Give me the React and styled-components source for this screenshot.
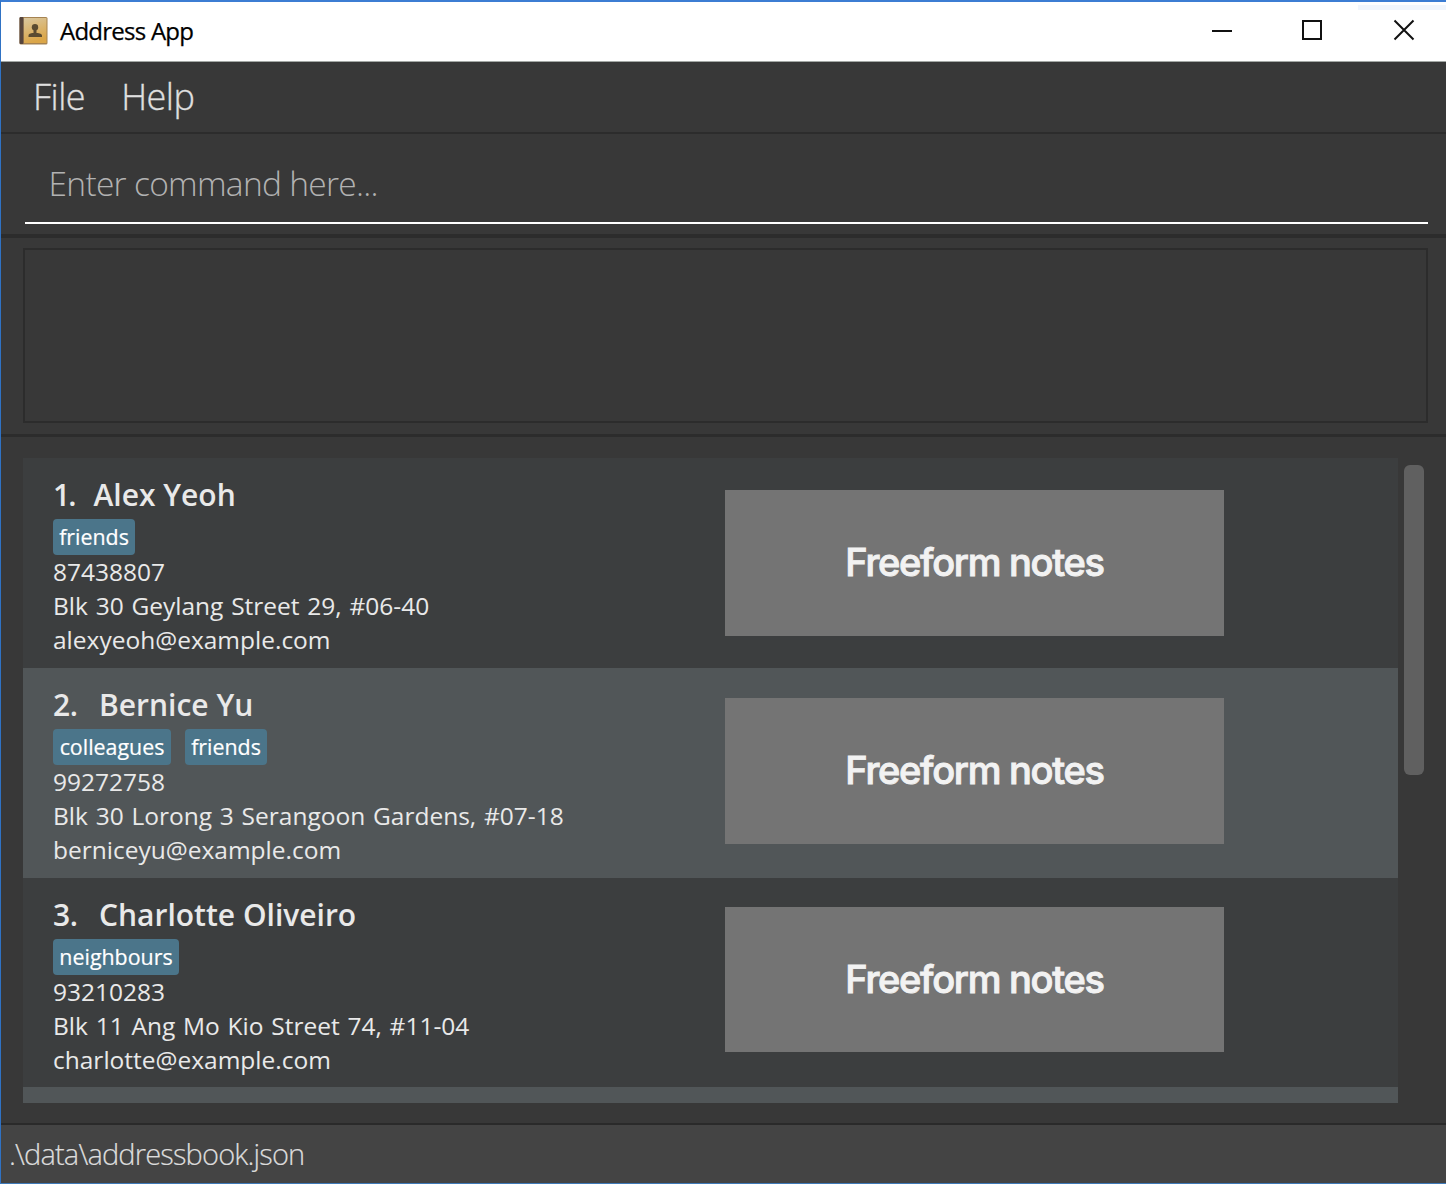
import React from "react";
import styled, { createGlobalStyle } from "styled-components";

const line = "#2c2c2c";

const GlobalStyle = createGlobalStyle`
  * { box-sizing: border-box; }
  body { margin: 0; background: #383838; }
`;

const Window = styled.div`
  width: 1446px;
  height: 1184px;
  display: flex;
  flex-direction: column;
  overflow: hidden;
  background: #383838;
  border-top: 2px solid #3c7dd3;
  border-left: 1px solid #2f72c4;
  border-bottom: 1px solid #3f7ab8;
  font-family: "Open Sans", "Noto Sans", sans-serif;
  white-space: nowrap;
`;

const TitleBar = styled.header`
  flex: none;
  display: flex;
  align-items: center;
  height: 60px;
  padding-left: 17px;
  background: linear-gradient(#f1f6fd, #f1f6fd) right 3px / 88px 5px no-repeat #fff;
  border-bottom: 1px solid #a3a8a5;
`;

const Title = styled.h1`
  flex: 1;
  margin: 0 0 0 12px;
  padding-bottom: 1px;
  font-size: 24px;
  font-weight: 400;
  line-height: 34px;
  letter-spacing: -0.75px;
  -webkit-text-stroke: 0.25px #000;
  color: #000;
`;

const WindowButton = styled.button`
  display: flex;
  align-items: center;
  justify-content: center;
  width: ${(p) => p.$width}px;
  height: 56px;
  padding: 0;
  border: 0;
  background: none;
`;

const WindowButtons = styled.div`
  display: flex;
  margin-right: -4px;
  padding-bottom: 3px;
`;

const MenuBar = styled.nav`
  flex: none;
  display: flex;
  gap: 36px;
  height: 72px;
  padding: 10px 0 0 32px;
  border-bottom: 2px solid ${line};
`;

const MenuItem = styled.span`
  font-size: 36px;
  font-weight: 300;
  line-height: 50px;
  letter-spacing: -0.5px;
  -webkit-text-stroke: 0.3px #e0e0e0;
  color: #e0e0e0;
`;

const CommandPane = styled.section`
  flex: none;
  height: 104px;
  padding: 14px 18px 0 24px;
  border-bottom: 4px solid ${line};
`;

const CommandInput = styled.div`
  height: 76px;
  padding-left: 23.5px;
  border-bottom: 2px solid #fff;
  font-size: 33.5px;
  font-weight: 300;
  line-height: 70px;
  letter-spacing: -0.7px;
  color: #b2b2b2;
`;

const ResultPane = styled.section`
  flex: none;
  height: 199px;
  padding: 10px 18px 0 22px;
  border-bottom: 3px solid ${line};
`;

const ResultBox = styled.div`
  height: 175px;
  border: 2px solid ${line};
`;

const ListPane = styled.main`
  flex: none;
  display: flex;
  gap: 6px;
  height: 688px;
  padding: 21px 0 20px 22px;
  border-bottom: 2px solid #2a2a2a;
`;

const PersonList = styled.ol`
  width: 1375px;
  height: 645px;
  margin: 0;
  padding: 0;
  overflow: hidden;
  list-style: none;
`;

const PersonCard = styled.li`
  display: flex;
  height: ${(p) => p.$height}px;
  padding-left: 30px;
  background: ${(p) => (p.$alt ? "#515658" : "#3c3e3f")};
`;

const Details = styled.div`
  width: 672px;
  padding-top: 17px;
  color: #e9e9e9;
`;

const NameLine = styled.h2`
  display: flex;
  margin: 0;
  font-size: 30px;
  font-weight: 600;
  line-height: 39px;
`;

const Index = styled.span`
  width: ${(p) => p.$width}px;
  letter-spacing: ${(p) => p.$spacing}px;
`;

const Tags = styled.div`
  display: flex;
  gap: 14px;
  height: 36px;
  margin-top: 5px;
`;

const Tag = styled.span`
  width: ${(p) => p.$width}px;
  border-radius: 4px;
  background: #4b758a;
  font-size: 21.4px;
  line-height: 36px;
  text-align: center;
  -webkit-text-stroke: 0.2px #fff;
  color: #fff;
`;

const Field = styled.p`
  margin: 0;
  font-size: 24.5px;
  line-height: 34px;
  letter-spacing: 0;
  word-spacing: 1.4px;
`;

const Notes = styled.div`
  display: flex;
  align-items: center;
  justify-content: center;
  width: 499px;
  height: ${(p) => p.$height}px;
  margin-top: ${(p) => p.$top}px;
  padding-bottom: 2px;
  background: #747474;
  font-family: Inter, "Liberation Sans", sans-serif;
  font-size: 38px;
  font-weight: 500;
  letter-spacing: -1.3px;
  -webkit-text-stroke: 0.9px #f2f2f2;
  color: #f2f2f2;
`;

const ScrollThumb = styled.div`
  width: 20px;
  height: 310px;
  margin-top: 7px;
  border-radius: 6px;
  background: #606060;
`;

const StatusBar = styled.footer`
  flex: 1;
  padding-left: 8px;
  background: #444;
  font-size: 29px;
  font-weight: 300;
  line-height: 58px;
  letter-spacing: -0.85px;
  -webkit-text-stroke: 0.2px #dcdcdc;
  color: #dcdcdc;
`;

const BookIcon = () => (
  <svg width="30" height="30" viewBox="0 1 30 30">
    <defs>
      <linearGradient id="cover" x1="0" y1="0" x2="0.3" y2="1">
        <stop offset="0" stopColor="#d9c7a0" />
        <stop offset="1" stopColor="#dba648" />
      </linearGradient>
    </defs>
    <rect x="1.500" y="1" width="28" height="27.5" rx="1.5" fill="#a58352" />
    <rect x="5.500" y="2" width="23" height="25" fill="url(#cover)" />
    <rect x="1.500" y="1" width="4" height="27" rx="1" fill="#56453d" />
    <circle cx="17" cy="11.200" r="3.200" fill="#5a4b31" />
    <path d="M15.500 12h3v5.500h-3zM10.500 21v-1.500c0-1.600 1.500-2.300 5-2.800h3c3.500.5 5.500 1.200 5.500 2.800V21z" fill="#5a4b31" />
  </svg>
);

const people = [
  {
    name: "Alex Yeoh", indexWidth: 40.5, indexSpacing: -2, height: 210, notesTop: 32, notesHeight: 146,
    tags: [["friends", 82]],
    phone: "87438807", address: "Blk 30 Geylang Street 29, #06-40", email: "alexyeoh@example.com",
  },
  {
    name: "Bernice Yu", indexWidth: 46, indexSpacing: -0.5, height: 210, notesTop: 30, notesHeight: 146,
    tags: [["colleagues", 118], ["friends", 82]],
    phone: "99272758", address: "Blk 30 Lorong 3 Serangoon Gardens, #07-18", email: "berniceyu@example.com",
  },
  {
    name: "Charlotte Oliveiro", indexWidth: 46, indexSpacing: -0.5, height: 209, notesTop: 29, notesHeight: 145,
    tags: [["neighbours", 126]],
    phone: "93210283", address: "Blk 11 Ang Mo Kio Street 74, #11-04", email: "charlotte@example.com",
  },
];

export default function App() {
  return (
    <>
      <GlobalStyle />
      <Window>
        <TitleBar>
          <BookIcon />
          <Title>Address App</Title>
          <WindowButtons>
            <WindowButton $width={88} aria-label="Minimize">
              <svg width="22" height="22"><path d="M1 12H21" stroke="#111" strokeWidth="2" /></svg>
            </WindowButton>
            <WindowButton $width={92} aria-label="Maximize">
              <svg width="22" height="22"><rect x="2" y="2" width="18" height="18" fill="none" stroke="#111" strokeWidth="2" /></svg>
            </WindowButton>
            <WindowButton $width={92} aria-label="Close">
              <svg width="22" height="22"><path d="M1.500 1.500L20.500 20.500M20.500 1.500L1.500 20.500" stroke="#111" strokeWidth="2" /></svg>
            </WindowButton>
          </WindowButtons>
        </TitleBar>
        <MenuBar>
          <MenuItem>File</MenuItem>
          <MenuItem>Help</MenuItem>
        </MenuBar>
        <CommandPane>
          <CommandInput>Enter command here...</CommandInput>
        </CommandPane>
        <ResultPane>
          <ResultBox />
        </ResultPane>
        <ListPane>
          <PersonList>
            {people.map((p, i) => (
              <PersonCard key={p.name} $alt={i % 2 === 1} $height={p.height}>
                <Details>
                  <NameLine>
                    <Index $width={p.indexWidth} $spacing={p.indexSpacing}>{i + 1}.</Index>
                    <span>{p.name}</span>
                  </NameLine>
                  <Tags>
                    {p.tags.map(([t, w]) => (
                      <Tag key={t} $width={w}>{t}</Tag>
                    ))}
                  </Tags>
                  <Field>{p.phone}</Field>
                  <Field>{p.address}</Field>
                  <Field>{p.email}</Field>
                </Details>
                <Notes $top={p.notesTop} $height={p.notesHeight}>Freeform notes</Notes>
              </PersonCard>
            ))}
            <PersonCard $alt $height={16} />
          </PersonList>
          <ScrollThumb />
        </ListPane>
        <StatusBar>.\data\addressbook.json</StatusBar>
      </Window>
    </>
  );
}
